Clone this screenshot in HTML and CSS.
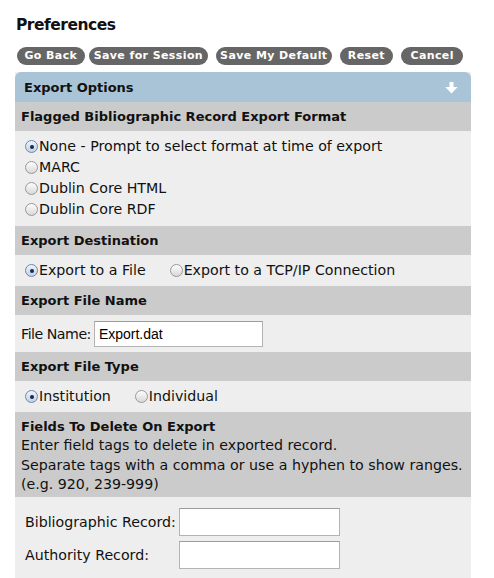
FILE: index.html
```html
<!DOCTYPE html>
<html>
<head>
<meta charset="utf-8">
<link rel="stylesheet" href="styles.css">
</head>
<body>
<div class="page">
  <h1 class="title">Preferences</h1>
  <div class="toolbar">
    <button class="btn btn-back">Go Back</button>
    <button class="btn btn-session">Save for Session</button>
    <button class="btn btn-default">Save My Default</button>
    <button class="btn btn-reset">Reset</button>
    <button class="btn btn-cancel">Cancel</button>
  </div>
  <div class="panel">
    <div class="panel-head">
      <span>Export Options</span>
      <svg class="arrow" width="13" height="12" viewBox="0 0 13 12"><path d="M6.5 0 V7.5" stroke="#fff" stroke-width="4" fill="none"/><path d="M0.3 5 L6.5 11.6 L12.7 5 Z" fill="#fff"/></svg>
    </div>

    <div class="sec-head">Flagged Bibliographic Record Export Format</div>
    <div class="sec-body list">
      <label class="opt"><span class="radio on"></span>None - Prompt to select format at time of export</label>
      <label class="opt"><span class="radio"></span>MARC</label>
      <label class="opt"><span class="radio"></span>Dublin Core HTML</label>
      <label class="opt"><span class="radio"></span>Dublin Core RDF</label>
    </div>

    <div class="sec-head">Export Destination</div>
    <div class="sec-body inline">
      <label class="opt"><span class="radio on"></span>Export to a File</label>
      <label class="opt"><span class="radio"></span>Export to a TCP/IP Connection</label>
    </div>

    <div class="sec-head">Export File Name</div>
    <div class="sec-body field-row">
      <span class="lbl">File Name:</span>
      <input class="text-input name-input" type="text" value="Export.dat">
    </div>

    <div class="sec-head">Export File Type</div>
    <div class="sec-body inline">
      <label class="opt"><span class="radio on"></span>Institution</label>
      <label class="opt"><span class="radio"></span>Individual</label>
    </div>

    <div class="sec-head fields-head">
      <div class="fh-title">Fields To Delete On Export</div>
      <div class="fh-line">Enter field tags to delete in exported record.</div>
      <div class="fh-line">Separate tags with a comma or use a hyphen to show ranges.</div>
      <div class="fh-line">(e.g. 920, 239-999)</div>
    </div>
    <div class="sec-body records">
      <div class="rec-row"><span class="rec-lbl">Bibliographic Record:</span><input class="text-input rec-input" type="text"></div>
      <div class="rec-row"><span class="rec-lbl">Authority Record:</span><input class="text-input rec-input" type="text"></div>
    </div>
  </div>
</div>
</body>
</html>
```
FILE: styles.css
```css
* { box-sizing: border-box; }
html, body { margin: 0; padding: 0; background: #fff; }
body { font-family: "DejaVu Sans", Verdana, sans-serif; color: #111; }
.page { padding: 16px 0 0 15px; width: 471px; }
.title { margin: 0 0 0 1px; font-size: 15.5px; font-weight: bold; line-height: 18px; letter-spacing: -0.5px; }
.toolbar { display: flex; margin: 13px 0 7px 2px; }
.btn {
  height: 18px; border: 0; border-radius: 9px; background: #666; color: #fff;
  font-family: "DejaVu Sans", Verdana, sans-serif; font-weight: bold; font-size: 11px;
  letter-spacing: 0.4px; padding: 0; line-height: 18px; text-align: center; margin-right: 8px;
}
.btn-back { width: 68px; margin-right: 4px; }
.btn-session { width: 120px; }
.btn-default { width: 116px; }
.btn-reset { width: 54px; }
.btn-cancel { width: 62px; }
.panel { width: 456px; background: #eee; }
.panel-head {
  height: 30px; background: #a9c4d7; border-radius: 6px 6px 0 0;
  display: flex; align-items: center; justify-content: space-between;
  padding: 0 13px 0 9px; font-weight: bold; font-size: 13px;
}
.arrow { display: block; margin-top: 1px; }
.sec-head { background: #cbcbcb; font-weight: bold; font-size: 13px; line-height: 19px; padding: 5px 6px; }
.sec-body { background: #eee; font-size: 14.2px; }
.opt { display: flex; align-items: center; line-height: 21px; }
.list { padding: 5px 0 6px 10px; }
.inline { display: flex; padding: 5px 0 5px 10px; }
.inline .opt:first-child { margin-right: 24px; }
.radio {
  width: 13px; height: 13px; border-radius: 50%; border: 1px solid #999;
  background: linear-gradient(#fdfdfd, #d8d8d8); margin-right: 1px; flex: none; position: relative;
}
.radio.on { border-color: #6f88aa; background: linear-gradient(#eef4fb, #bfd1e8); }
.radio.on::after { content: ""; position: absolute; left: 3.5px; top: 3.5px; width: 4px; height: 4px; border-radius: 50%; background: #1a2a44; }
.field-row { display: flex; align-items: center; padding: 6px 0 5px 6px; }
.lbl { margin-right: 3px; letter-spacing: -0.5px; }
.text-input {
  border: 1px solid #b3b3b3; border-top-color: #9c9c9c; background: #fff; margin: 0;
  font-family: "Liberation Sans", Arial, sans-serif; font-size: 14px; color: #000; padding: 0 4px;
}
.name-input { width: 169px; height: 26px; }
.fields-head { padding: 5px 6px 2.5px 6px; }
.fh-title { line-height: 19px; }
.fh-line { font-weight: normal; line-height: 19.5px; font-size: 14.2px; }
.records { padding: 11px 0 10px 10px; }
.rec-row { display: flex; align-items: center; height: 28px; margin-bottom: 5px; }
.rec-row:last-child { margin-bottom: 0; }
.rec-lbl { width: 154px; }
.rec-input { width: 161px; height: 28px; }
```
